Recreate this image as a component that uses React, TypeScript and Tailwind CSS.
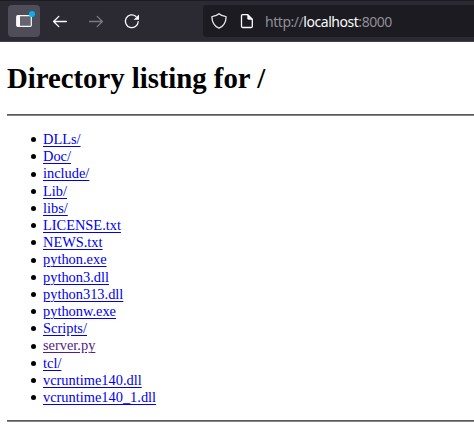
type Entry = { name: string; visited?: boolean };

const entries: Entry[] = [
  { name: 'DLLs/' },
  { name: 'Doc/' },
  { name: 'include/' },
  { name: 'Lib/' },
  { name: 'libs/' },
  { name: 'LICENSE.txt' },
  { name: 'NEWS.txt' },
  { name: 'python.exe' },
  { name: 'python3.dll' },
  { name: 'python313.dll' },
  { name: 'pythonw.exe' },
  { name: 'Scripts/' },
  { name: 'server.py', visited: true },
  { name: 'tcl/' },
  { name: 'vcruntime140.dll' },
  { name: 'vcruntime140_1.dll' },
];

function Toolbar() {
  return (
    <header className="flex h-[42px] items-center border-t border-b border-t-[#1c1b22] border-b-[#42414d] bg-[#2b2a33] pl-2 text-[#fbfbfe]">
      <button className="relative flex size-8 shrink-0 items-center justify-center rounded bg-[#4f4e58]" aria-label="Sidebar">
        <svg width="16" height="16" viewBox="0 0 16 16" fill="none">
          <rect x="0.7" y="2.6" width="14.6" height="10.8" rx="1.2" fill="#66656e" stroke="currentColor" strokeWidth="1.2" />
          <path d="M1 3h3v10H1z" fill="currentColor" />
        </svg>
        <span className="absolute top-[6px] right-[5px] size-[6px] rounded-full bg-[#00b3f4]" />
      </button>
      <button className="ml-3 flex size-4 shrink-0" aria-label="Back">
        <svg width="16" height="16" viewBox="0 0 16 16" fill="none" stroke="currentColor" strokeWidth="1.3" strokeLinecap="round" strokeLinejoin="round">
          <path d="M14.4 8.5H1.6M6.8 3.4L1.6 8.5l5.2 5.1" />
        </svg>
      </button>
      <button className="ml-5 flex size-4 shrink-0 text-[#7b7a83]" aria-label="Forward">
        <svg width="16" height="16" viewBox="0 0 16 16" fill="none" stroke="currentColor" strokeWidth="1.3" strokeLinecap="round" strokeLinejoin="round">
          <path d="M1.6 8.5h12.8M9.2 3.4l5.2 5.1-5.2 5.1" />
        </svg>
      </button>
      <button className="ml-5 flex size-4 shrink-0" aria-label="Reload">
        <svg width="16" height="16" viewBox="0 0 16 16" fill="none">
          <path d="M14.2 8.7A6.4 6.4 0 1 1 12 3.4" stroke="currentColor" strokeWidth="1.3" strokeLinecap="round" />
          <path d="M15 1.4v5.3H9.6z" fill="currentColor" />
        </svg>
      </button>
      <div className="ml-[63px] flex h-8 flex-1 items-center rounded-l bg-[#1c1b22] pl-2">
        <svg width="16" height="16" viewBox="0 0 16 16" fill="none" stroke="#e4e4e9" strokeWidth="1.3" strokeLinejoin="round">
          <path d="M8 .8C6.8 2 4 3.1 1.7 3.3c-.5 0-.8.4-.8.8.2 5 2.4 9.1 7.1 11.1 4.7-2 6.9-6.1 7.1-11.1 0-.4-.3-.8-.8-.8C12 3.1 9.2 2 8 .8z" />
        </svg>
        <svg className="ml-3" width="16" height="16" viewBox="0 0 16 16" fill="none">
          <path d="M3.7 1.7h5.1l4.5 4.5v7.1c0 .8-.5 1.2-1.2 1.2H3.7c-.7 0-1.2-.5-1.2-1.2V2.9c0-.7.5-1.2 1.2-1.2z" stroke="#fbfbfe" strokeWidth="1.3" strokeLinejoin="round" />
          <path d="M8.3 1.5v4c0 .7.5 1.2 1.2 1.2h4z" fill="#fbfbfe" />
        </svg>
        <span className="ml-[10px] whitespace-pre pt-[2px] font-['Noto_Sans',sans-serif] text-[14px] leading-5 tracking-[-0.46px] text-[#8f8e95]">
          http://<span className="text-[#fbfbfe]">localhost</span>:8000
        </span>
      </div>
    </header>
  );
}

export default function App() {
  return (
    <div className="h-[436px] w-[474px] overflow-hidden bg-white">
      <Toolbar />
      <main className="pl-[7px] font-['Liberation_Serif',serif] text-black">
        <h1 className="pt-5 text-[28.8px] leading-[33px] font-bold tracking-[-0.03px]">Directory listing for /</h1>
        <hr className="mt-[19px] h-[2px] border-t border-b border-t-[#5a595c] border-b-[#858488]" />
        <ul className="mt-[15px] pl-[23.5px] text-[14.4px] leading-[17.2px]">
          {entries.map(({ name, visited }) => (
            <li key={name} className="flex items-center">
              <span className="mr-[7.5px] size-[5px] rounded-full bg-black" />
              <a
                href={name}
                className={
                  visited
                    ? 'text-[#551a8b] underline decoration-1 underline-offset-2'
                    : 'text-[#0000ee] underline decoration-1 underline-offset-2'
                }
              >
                {name}
              </a>
            </li>
          ))}
        </ul>
        <hr className="mt-[14px] h-[2px] border-t border-b border-t-[#5a595c] border-b-[#858488]" />
      </main>
    </div>
  );
}
